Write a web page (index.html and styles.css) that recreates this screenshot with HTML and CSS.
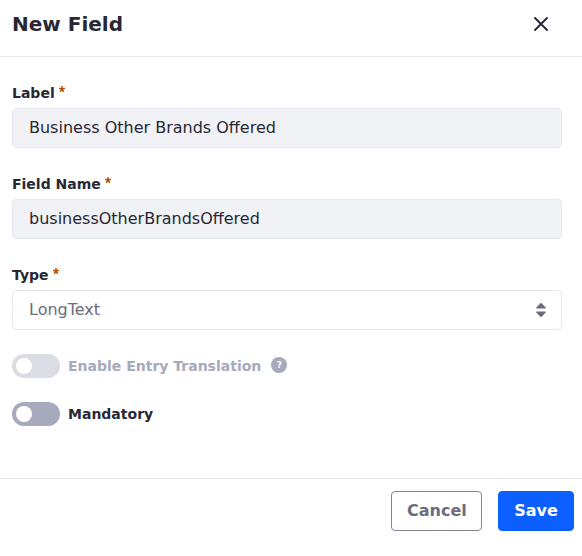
FILE: index.html
```html
<!DOCTYPE html>
<html lang="en">
<head>
<meta charset="utf-8">
<title>New Field</title>
<link rel="stylesheet" href="styles.css">
</head>
<body>
<svg width="0" height="0" class="sprite" aria-hidden="true">
  <symbol id="asterisk" viewBox="0 0 6 6">
    <path d="M3 0V3.2M.1 2.3 3 3.2 5.9 2.3M1.2 5.8 3 3.2 4.8 5.8" fill="none" stroke="currentColor" stroke-width="1.5"/>
  </symbol>
</svg>
<div class="modal">
  <header class="modal-header">
    <h1 class="modal-title">New Field</h1>
    <button class="close" type="button" aria-label="Close">
      <svg width="16" height="16" viewBox="0 0 16 16"><path d="M2 2 14 14M14 2 2 14" fill="none" stroke="currentColor" stroke-width="1.9" stroke-linecap="round"/></svg>
    </button>
  </header>
  <form class="modal-body">
    <div class="form-group">
      <label class="label" for="label">Label<svg class="required"><use href="#asterisk"/></svg></label>
      <input class="control" id="label" type="text" value="Business Other Brands Offered">
    </div>
    <div class="form-group">
      <label class="label" for="name">Field Name<svg class="required"><use href="#asterisk"/></svg></label>
      <input class="control" id="name" type="text" value="businessOtherBrandsOffered">
    </div>
    <div class="form-group">
      <label class="label" for="type">Type<svg class="required"><use href="#asterisk"/></svg></label>
      <button class="control select" id="type" type="button">
        <span>LongText</span>
        <svg width="10" height="14" viewBox="0 0 10 14"><path d="M4.4.3Q5-.2 5.6.3L9.7 4.4Q10.1 5.4 9.2 5.5H.8Q-.1 5.4.3 4.4ZM4.4 13.7Q5 14.2 5.6 13.7L9.7 9.6Q10.1 8.6 9.2 8.5H.8Q-.1 8.6.3 9.6Z" fill="currentColor"/></svg>
      </button>
    </div>
    <div class="toggle-row disabled">
      <span class="toggle"></span>
      <span class="toggle-label">Enable Entry Translation</span>
      <span class="help">?</span>
    </div>
    <div class="toggle-row">
      <span class="toggle"></span>
      <span class="toggle-label">Mandatory</span>
    </div>
  </form>
  <footer class="modal-footer">
    <button class="btn btn-cancel" type="button">Cancel</button>
    <button class="btn btn-save" type="button">Save</button>
  </footer>
</div>
</body>
</html>
```
FILE: styles.css
```css
* { box-sizing: border-box; }
body {
  margin: 0;
  background: #fff;
  color: #272833;
  font: 16px/24px "DejaVu Sans", sans-serif;
}
button, input { font: inherit; }
.sprite { display: none; }
.modal { display: flex; flex-direction: column; height: 556px; }
.modal-header {
  display: flex;
  align-items: center;
  justify-content: space-between;
  flex: none;
  height: 57px;
  padding: 0 25px 8px 12px;
  border-bottom: 1px solid #e7e7ed;
}
.modal-title { margin: 0; font-size: 20px; line-height: 24px; font-weight: 700; }
.close {
  display: flex;
  align-items: center;
  justify-content: center;
  width: 32px;
  height: 32px;
  padding: 0;
  border: 0;
  background: none;
  color: #272833;
}
.modal-body { flex: 1; padding: 24px 20px 0 12px; }
.form-group { margin-bottom: 24px; }
.label {
  display: flex;
  align-items: flex-start;
  height: 22px;
  margin-bottom: 5px;
  font-size: 14px;
  line-height: 24px;
  font-weight: 700;
}
.required { width: 6px; height: 6px; margin: 5px 0 0 4px; color: #b95000; }
.control {
  display: block;
  width: 100%;
  height: 40px;
  padding: 0 16px 2px;
  border: 1px solid #e7e7ed;
  border-radius: 4px;
  background: #f1f2f5;
  color: #272833;
}
.select {
  display: flex;
  align-items: center;
  justify-content: space-between;
  padding: 0 15px 0 16px;
  background: #fff;
  color: #6b6c7e;
}
.toggle-row {
  display: flex;
  align-items: center;
  height: 24px;
  margin-bottom: 24px;
  font-size: 14px;
  font-weight: 700;
}
.toggle {
  display: flex;
  align-items: center;
  width: 48px;
  height: 24px;
  padding-left: 4px;
  margin-right: 8px;
  border-radius: 12px;
  background: #a7a9bc;
}
.toggle::before { content: ""; width: 16px; height: 16px; border-radius: 50%; background: #fff; }
.disabled { color: #a7a9bc; }
.disabled .toggle { background: #dcdce5; }
.help {
  width: 16px;
  height: 16px;
  margin: 0 0 2px 10px;
  border-radius: 50%;
  background: #a7a9bc;
  color: #fff;
  font-size: 9px;
  line-height: 16px;
  text-align: center;
}
.modal-footer {
  display: flex;
  justify-content: flex-end;
  gap: 16px;
  height: 78px;
  padding: 12px 8px 0;
  border-top: 1px solid #e7e7ed;
}
.btn {
  height: 40px;
  padding: 0 15px;
  border: 1px solid;
  border-radius: 4px;
  font-weight: 700;
}
.btn-cancel { width: 91px; border-color: #83849a; background: #fff; color: #6b6c7e; }
.btn-save { width: 76px; border-color: #0b5fff; background: #0b5fff; color: #fff; }
```
